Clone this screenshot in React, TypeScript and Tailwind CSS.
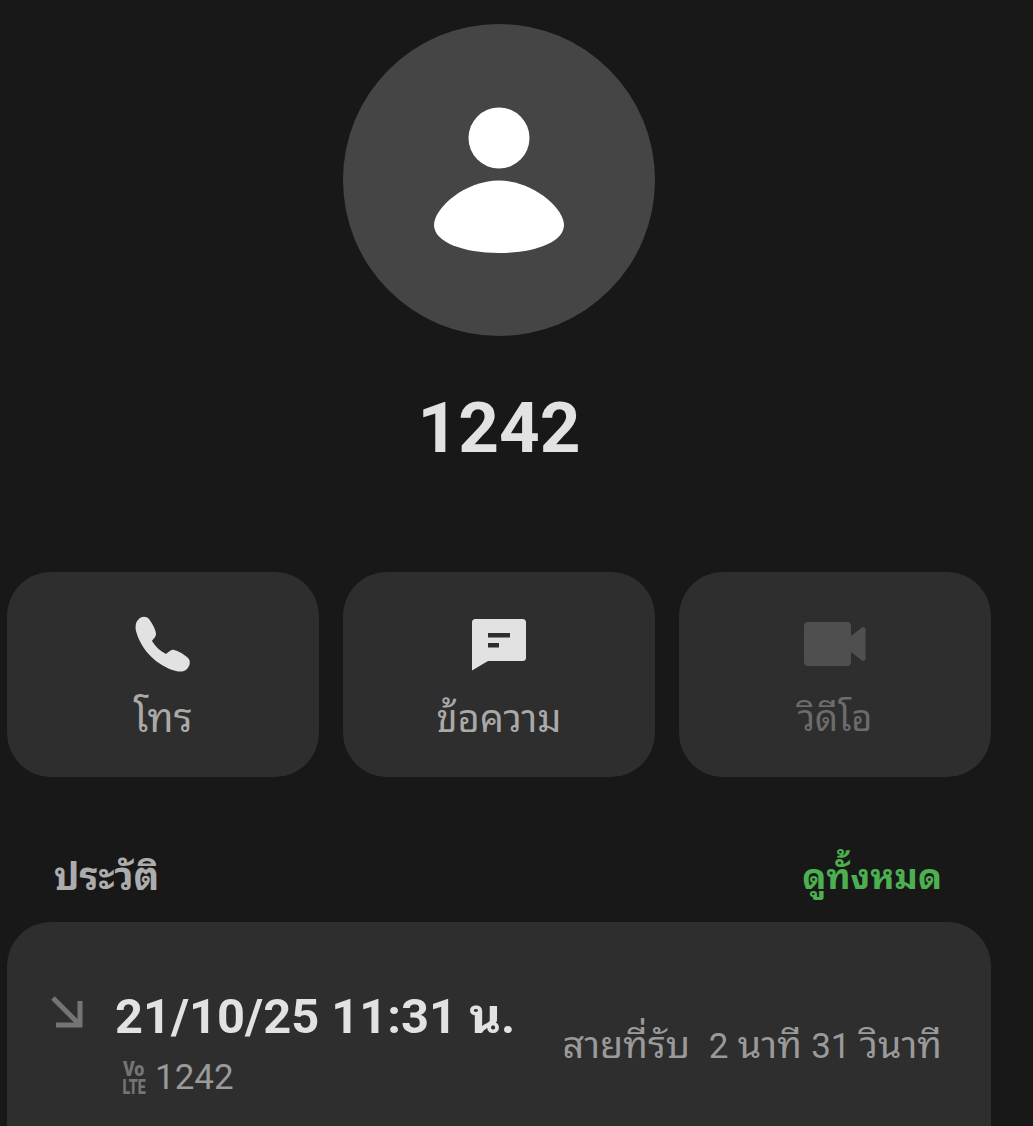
const font = { fontFamily: 'Roboto, "Noto Sans Thai Looped", "Noto Sans", "Noto Sans Thai", "Liberation Sans", sans-serif' };

function PhoneIcon() {
  return (
    <svg viewBox="0 0 56 56" className="h-[56px] w-[56px]" fill="#e2e2e2">
      <path d="M3 4C6 0 11 0 14 3C17 7 21 14 21 18C21 21 18 23 17 25C21 31 25 35 31 38C34 36 36 33 39 34C44 35 50 39 53 42C56 45 55 50 52 53C49 56 45 56 41 55C22 50 6 34 1 15C0 10 1 6 3 4Z" />
    </svg>
  );
}

function MessageIcon() {
  return (
    <svg viewBox="0 0 54 54" className="h-[54px] w-[54px] translate-y-[2px]">
      <path
        d="M3.500 0h47a3.500 3.500 0 0 1 3.500 3.500v35a3.500 3.500 0 0 1-3.500 3.500H16L0 51.500V3.500A3.500 3.500 0 0 1 3.500 0z"
        fill="#e2e2e2"
      />
      <rect x="16" y="14" width="22" height="4.500" fill="#2e2e2e" />
      <rect x="16" y="24" width="11" height="4.500" fill="#2e2e2e" />
    </svg>
  );
}

function VideoIcon() {
  return (
    <svg viewBox="0 0 62 44" className="h-[44px] w-[62px]" fill="#4f4f4f">
      <path d="M4 0h39a4 4 0 0 1 4 4v36a4 4 0 0 1-4 4H4a4 4 0 0 1-4-4V4a4 4 0 0 1 4-4z" />
      <path d="M47 14l11-8.500c1.500-1.100 3.500-.2 3.500 1.700v29.600c0 1.900-2 2.800-3.500 1.700L47 30z" />
    </svg>
  );
}

export default function App() {
  return (
    <div style={font} className="h-[1126px] w-[1033px] overflow-hidden bg-[#181818] pl-[7px] pr-[42px] pt-[24px]">
      {/* Avatar */}
      <div className="flex justify-center">
        <div className="flex h-[312px] w-[312px] items-center justify-center rounded-full bg-[#454545]">
          <svg viewBox="0 0 132 148" className="h-[148px] w-[132px]" fill="#ffffff">
            <circle cx="66" cy="32" r="30.500" />
            <path d="M66 74.500C32 74.500 1 102 1 119C1 136 30 147 66 147C102 147 131 136 131 119C131 102 100 74.500 66 74.500Z" />
          </svg>
        </div>
      </div>

      <h1 className="mt-[51px] text-center text-[71px] font-bold leading-[82px] text-[#e2e2e2]">1242</h1>

      {/* Actions */}
      <div className="mt-[103px] grid grid-cols-3 gap-[24px]">
        <div className="flex h-[205px] flex-col items-center rounded-[44px] bg-[#2e2e2e] pt-[42px]">
          <div className="flex h-[60px] items-center"><PhoneIcon /></div>
          <span className="mt-[21px] text-[40px] leading-[48px] text-[#a9a9a9]">โทร</span>
        </div>
        <div className="flex h-[205px] flex-col items-center rounded-[44px] bg-[#2e2e2e] pt-[42px]">
          <div className="flex h-[60px] items-center"><MessageIcon /></div>
          <span className="mt-[21px] text-[38px] leading-[48px] text-[#a9a9a9]">ข้อความ</span>
        </div>
        <div className="flex h-[205px] flex-col items-center rounded-[44px] bg-[#2e2e2e] pt-[42px]">
          <div className="flex h-[60px] items-center"><VideoIcon /></div>
          <span className="mt-[21px] text-[36px] leading-[48px] text-[#6c6c6c]">วิดีโอ</span>
        </div>
      </div>

      {/* History */}
      <div className="mt-[76px] flex items-center justify-between pl-[47px] pr-[49px]">
        <span className="text-[38px] font-bold leading-[48px] text-[#acacac]">ประวัติ</span>
        <span className="text-[35.500px] font-bold leading-[48px] text-[#4caf50]">ดูทั้งหมด</span>
      </div>

      <div className="mt-[21px] flex h-[260px] items-start rounded-t-[44px] bg-[#2e2e2e] pl-[44px] pr-[49px] pt-[67px]">
        <svg viewBox="0 0 32 32" className="mt-[7px] h-[32px] w-[32px]" fill="none" stroke="#747474" strokeWidth="5">
          <path d="M2 2l26 26M29 5v24H5" />
        </svg>
        <div className="ml-[32px] flex flex-col">
          <span className="text-[48.800px] font-bold leading-[56px] text-[#e2e2e2]">21/10/25 11:31 น.</span>
          <div className="mt-[12px] flex items-center pl-[6px]">
            <div className="flex w-[26px] flex-col items-center text-[21px] font-black leading-[18px] text-[#747474]">
              <span className="scale-x-[0.85]">Vo</span>
              <span className="scale-x-[0.68]">LTE</span>
            </div>
            <span className="ml-[8px] text-[35px] leading-[42px] text-[#9a9a9a]">1242</span>
          </div>
        </div>
        <span className="ml-auto mt-[32px] whitespace-pre text-[37.700px] leading-[48px] text-[#9a9a9a]">สายที่รับ  <span className="text-[35px]">2</span> นาที <span className="text-[35px]">31</span> วินาที</span>
      </div>
    </div>
  );
}
